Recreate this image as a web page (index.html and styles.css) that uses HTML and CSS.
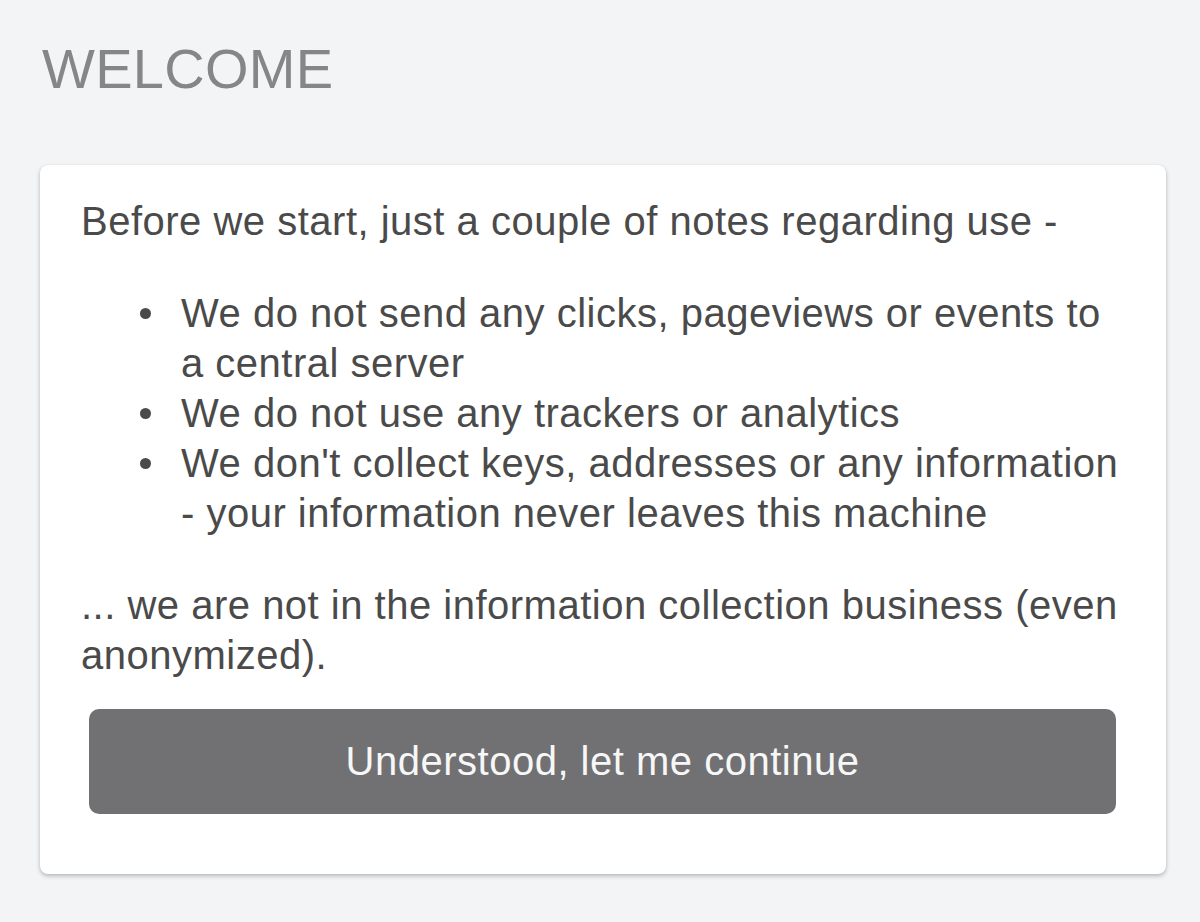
FILE: index.html
```html
<!DOCTYPE html>
<html>
<head>
<meta charset="utf-8">
<link rel="stylesheet" href="styles.css">
</head>
<body>
<div class="page">
  <h1 class="title">WELCOME</h1>
  <div class="card">
    <p class="lead">Before we start, just a couple of notes regarding use -</p>
    <ul class="notes">
      <li>We do not send any clicks, pageviews or events to a central server</li>
      <li>We do not use any trackers or analytics</li>
      <li>We don't collect keys, addresses or any information - your information never leaves this machine</li>
    </ul>
    <p class="outro">... we are not in the information collection business (even anonymized).</p>
    <button class="btn">Understood, let me continue</button>
  </div>
</div>
</body>
</html>
```

FILE: styles.css
```css
html, body {
  margin: 0;
  padding: 0;
  background: #f3f4f6;
}
body {
  font-family: "Liberation Sans", Arial, sans-serif;
  color: #4a4a4a;
}
.page {
  padding: 36px 34px 40px 40px;
}
.title {
  margin: 0 0 0 2px;
  font-size: 56px;
  font-weight: 400;
  line-height: 66px;
  letter-spacing: 0.3px;
  color: #868686;
}
.card {
  margin-top: 63px;
  background: #ffffff;
  border-radius: 8px;
  box-shadow: 0 2px 4px rgba(0, 0, 0, 0.25), 0 0 1px rgba(0, 0, 0, 0.1);
  padding: 31px 40px 60px 41px;
  font-size: 40px;
  line-height: 50px;
  letter-spacing: 0.5px;
}
.lead {
  margin: 0;
}
.notes {
  margin: 42px 0 42px 0;
  padding-left: 100px;
  list-style: none;
}
.notes li {
  position: relative;
}
.notes li::before {
  content: "";
  position: absolute;
  left: -41px;
  top: 20px;
  width: 11px;
  height: 11px;
  border-radius: 50%;
  background: #4a4a4a;
}
.outro {
  margin: 0;
}
.btn {
  display: block;
  width: calc(100% - 18px);
  margin: 29px 10px 0 8px;
  height: 105px;
  border: none;
  border-radius: 10px;
  background: #717173;
  color: #f7f7f7;
  font-family: "Liberation Sans", Arial, sans-serif;
  font-size: 40px;
  letter-spacing: 0.5px;
}
```
